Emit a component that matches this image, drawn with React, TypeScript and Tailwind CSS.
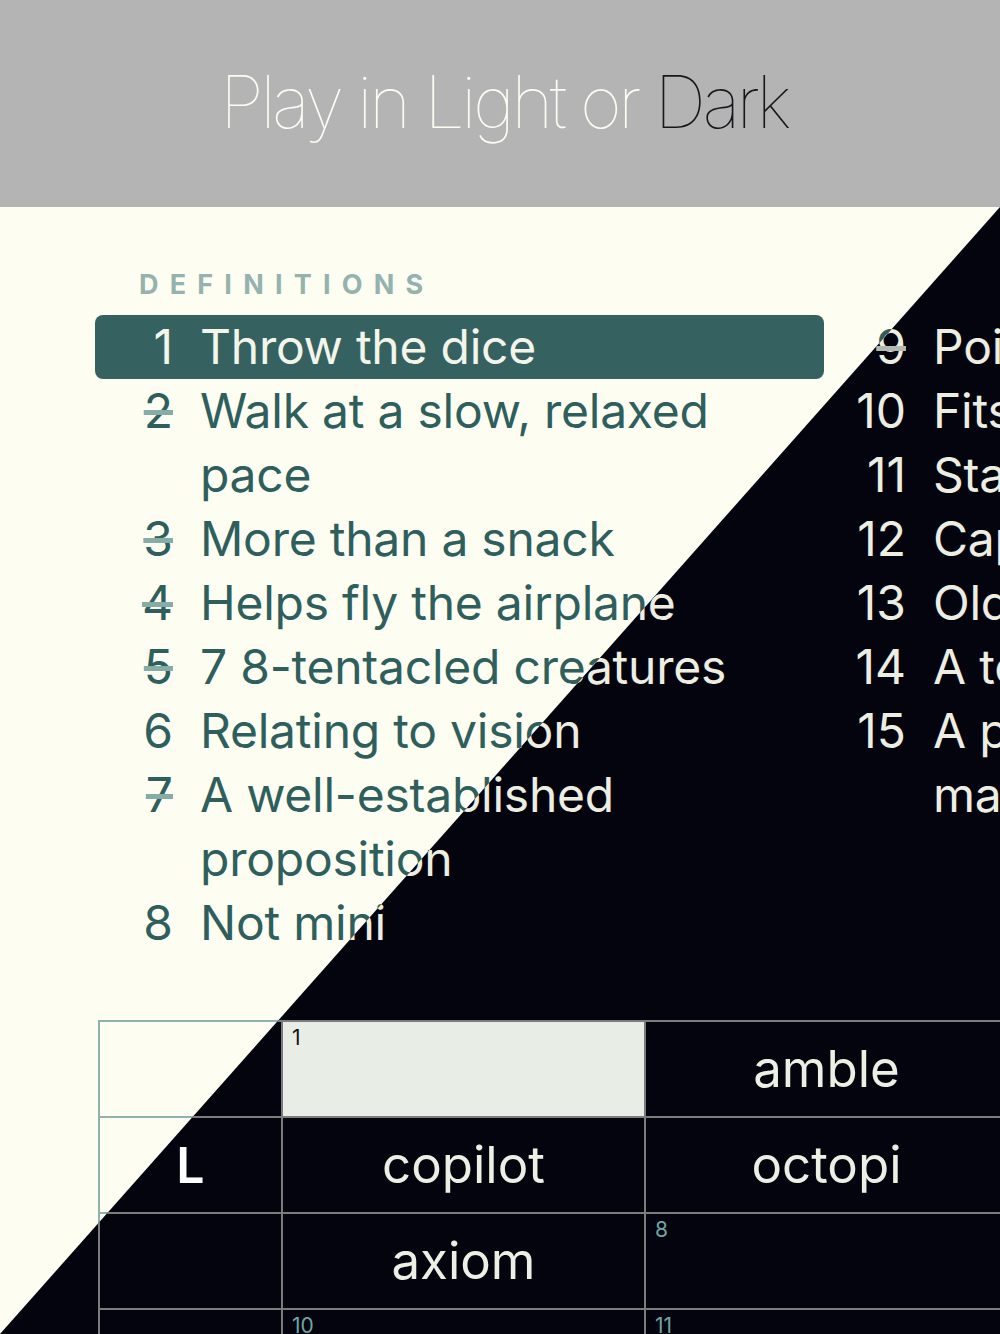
type Item = { n: number; lines: string[]; done?: boolean; active?: boolean };

const left: Item[] = [
  { n: 1, lines: ["Throw the dice"], active: true },
  { n: 2, lines: ["Walk at a slow, relaxed", "pace"], done: true },
  { n: 3, lines: ["More than a snack"], done: true },
  { n: 4, lines: ["Helps fly the airplane"], done: true },
  { n: 5, lines: ["7 8-tentacled creatures"], done: true },
  { n: 6, lines: ["Relating to vision"] },
  { n: 7, lines: ["A well-established", "proposition"], done: true },
  { n: 8, lines: ["Not mini"] },
];

const right: Item[] = [
  { n: 9, lines: ["Pointed remark"], done: true },
  { n: 10, lines: ["Fits perfectly"] },
  { n: 11, lines: ["Stays afloat"] },
  { n: 12, lines: ["Capital of Italy"] },
  { n: 13, lines: ["Older than old"] },
  { n: 14, lines: ["A tool for cutting"] },
  { n: 15, lines: ["A person who draws", "maps"] },
];

type Cell = { num?: number; word?: string; letter?: string; selected?: boolean };

const grid: Cell[][] = [
  [{}, { num: 1, selected: true }, { word: "amble" }],
  [{ letter: "L" }, { word: "copilot" }, { word: "octopi" }],
  [{}, { word: "axiom" }, { num: 8 }],
  [{}, { num: 10 }, { num: 11 }],
];

function Clue({ item, dark }: { item: Item; dark: boolean }) {
  const text = dark ? "text-[#eceee2]" : "text-[#2f5f5c]";
  const strike = dark ? "decoration-[#b4b8b0]" : "decoration-[#86aca7]";
  return (
    <div
      className={`flex rounded-lg ${
        item.active && !dark ? "bg-[#356260] text-[#f3f5ea]" : text
      }`}
    >
      <span
        className={`w-[78px] shrink-0 text-right ${
          item.done ? `line-through decoration-[length:5px] ${strike}` : ""
        }`}
      >
        {item.n}
      </span>
      <span className="ml-[27px] flex flex-col tracking-[-0.005em]">
        {item.lines.map((l) => (
          <span key={l} className="whitespace-nowrap">
            {l}
          </span>
        ))}
      </span>
    </div>
  );
}

function Panel({ dark }: { dark: boolean }) {
  const border = dark ? "border-[#7c7c7c]" : "border-[#90b2ae]";
  return (
    <div
      className={`h-full w-full overflow-hidden ${dark ? "bg-[#03040e]" : "bg-[#fdfdf2]"}`}
      style={{ fontFamily: "Inter, 'Open Sans', sans-serif" }}
    >
      <div className="pl-[139px] pt-[61px] text-[27px] font-bold leading-[34px] tracking-[0.415em] text-[#94b3ae]">
        DEFINITIONS
      </div>
      <div className="mt-[13px] flex gap-[4px] pl-[95px] text-[48px] leading-[64px]">
        <div className="flex w-[729px] shrink-0 flex-col">
          {left.map((it) => (
            <Clue key={it.n} item={it} dark={dark} />
          ))}
        </div>
        <div className="flex w-[729px] shrink-0 flex-col">
          {right.map((it) => (
            <Clue key={it.n} item={it} dark={dark} />
          ))}
        </div>
      </div>
      <div
        className={`ml-[98px] mt-[65px] grid w-[911px] grid-cols-[183px_363px_363px] border-l-2 border-t-2 ${border}`}
      >
        {grid.flat().map((c, i) => (
          <div
            key={i}
            className={`relative flex h-[96px] items-center justify-center border-b-2 border-r-2 ${border} ${
              c.selected ? (dark ? "bg-[#e8ede5]" : "bg-[#d6e4e1]") : ""
            }`}
          >
            {c.num !== undefined && (
              <span
                className={`absolute left-[9px] top-[2px] text-[21px] leading-[28px] ${
                  c.selected ? "text-[#14151a]" : dark ? "text-[#6ea6a3]" : "text-[#5d8d89]"
                }`}
              >
                {c.num}
              </span>
            )}
            {c.word && (
              <span className={`text-[51px] ${dark ? "text-[#eeefe4]" : "text-[#2f5f5c]"}`}>{c.word}</span>
            )}
            {c.letter && (
              <span className={`text-[50px] font-semibold ${dark ? "text-white" : "text-[#2f5f5c]"}`}>
                {c.letter}
              </span>
            )}
          </div>
        ))}
      </div>
    </div>
  );
}

export default function App() {
  return (
    <div className="h-[1334px] w-[1000px] overflow-hidden">
      <header
        className="flex h-[207px] items-center justify-center bg-[#b5b4b5] pb-[4px] pl-[8px] text-[72px] font-thin tracking-[-0.05em] text-[#fdfdf3]"
        style={{ fontFamily: "Inter, Roboto, sans-serif" }}
      >
        Play in Light or&nbsp;<span className="text-[#16161b]">Dark</span>
      </header>
      <div className="relative h-[1127px]">
        <Panel dark={false} />
        <div className="absolute inset-0 [clip-path:polygon(100%_0,100%_100%,0_100%)]">
          <Panel dark />
        </div>
      </div>
    </div>
  );
}
